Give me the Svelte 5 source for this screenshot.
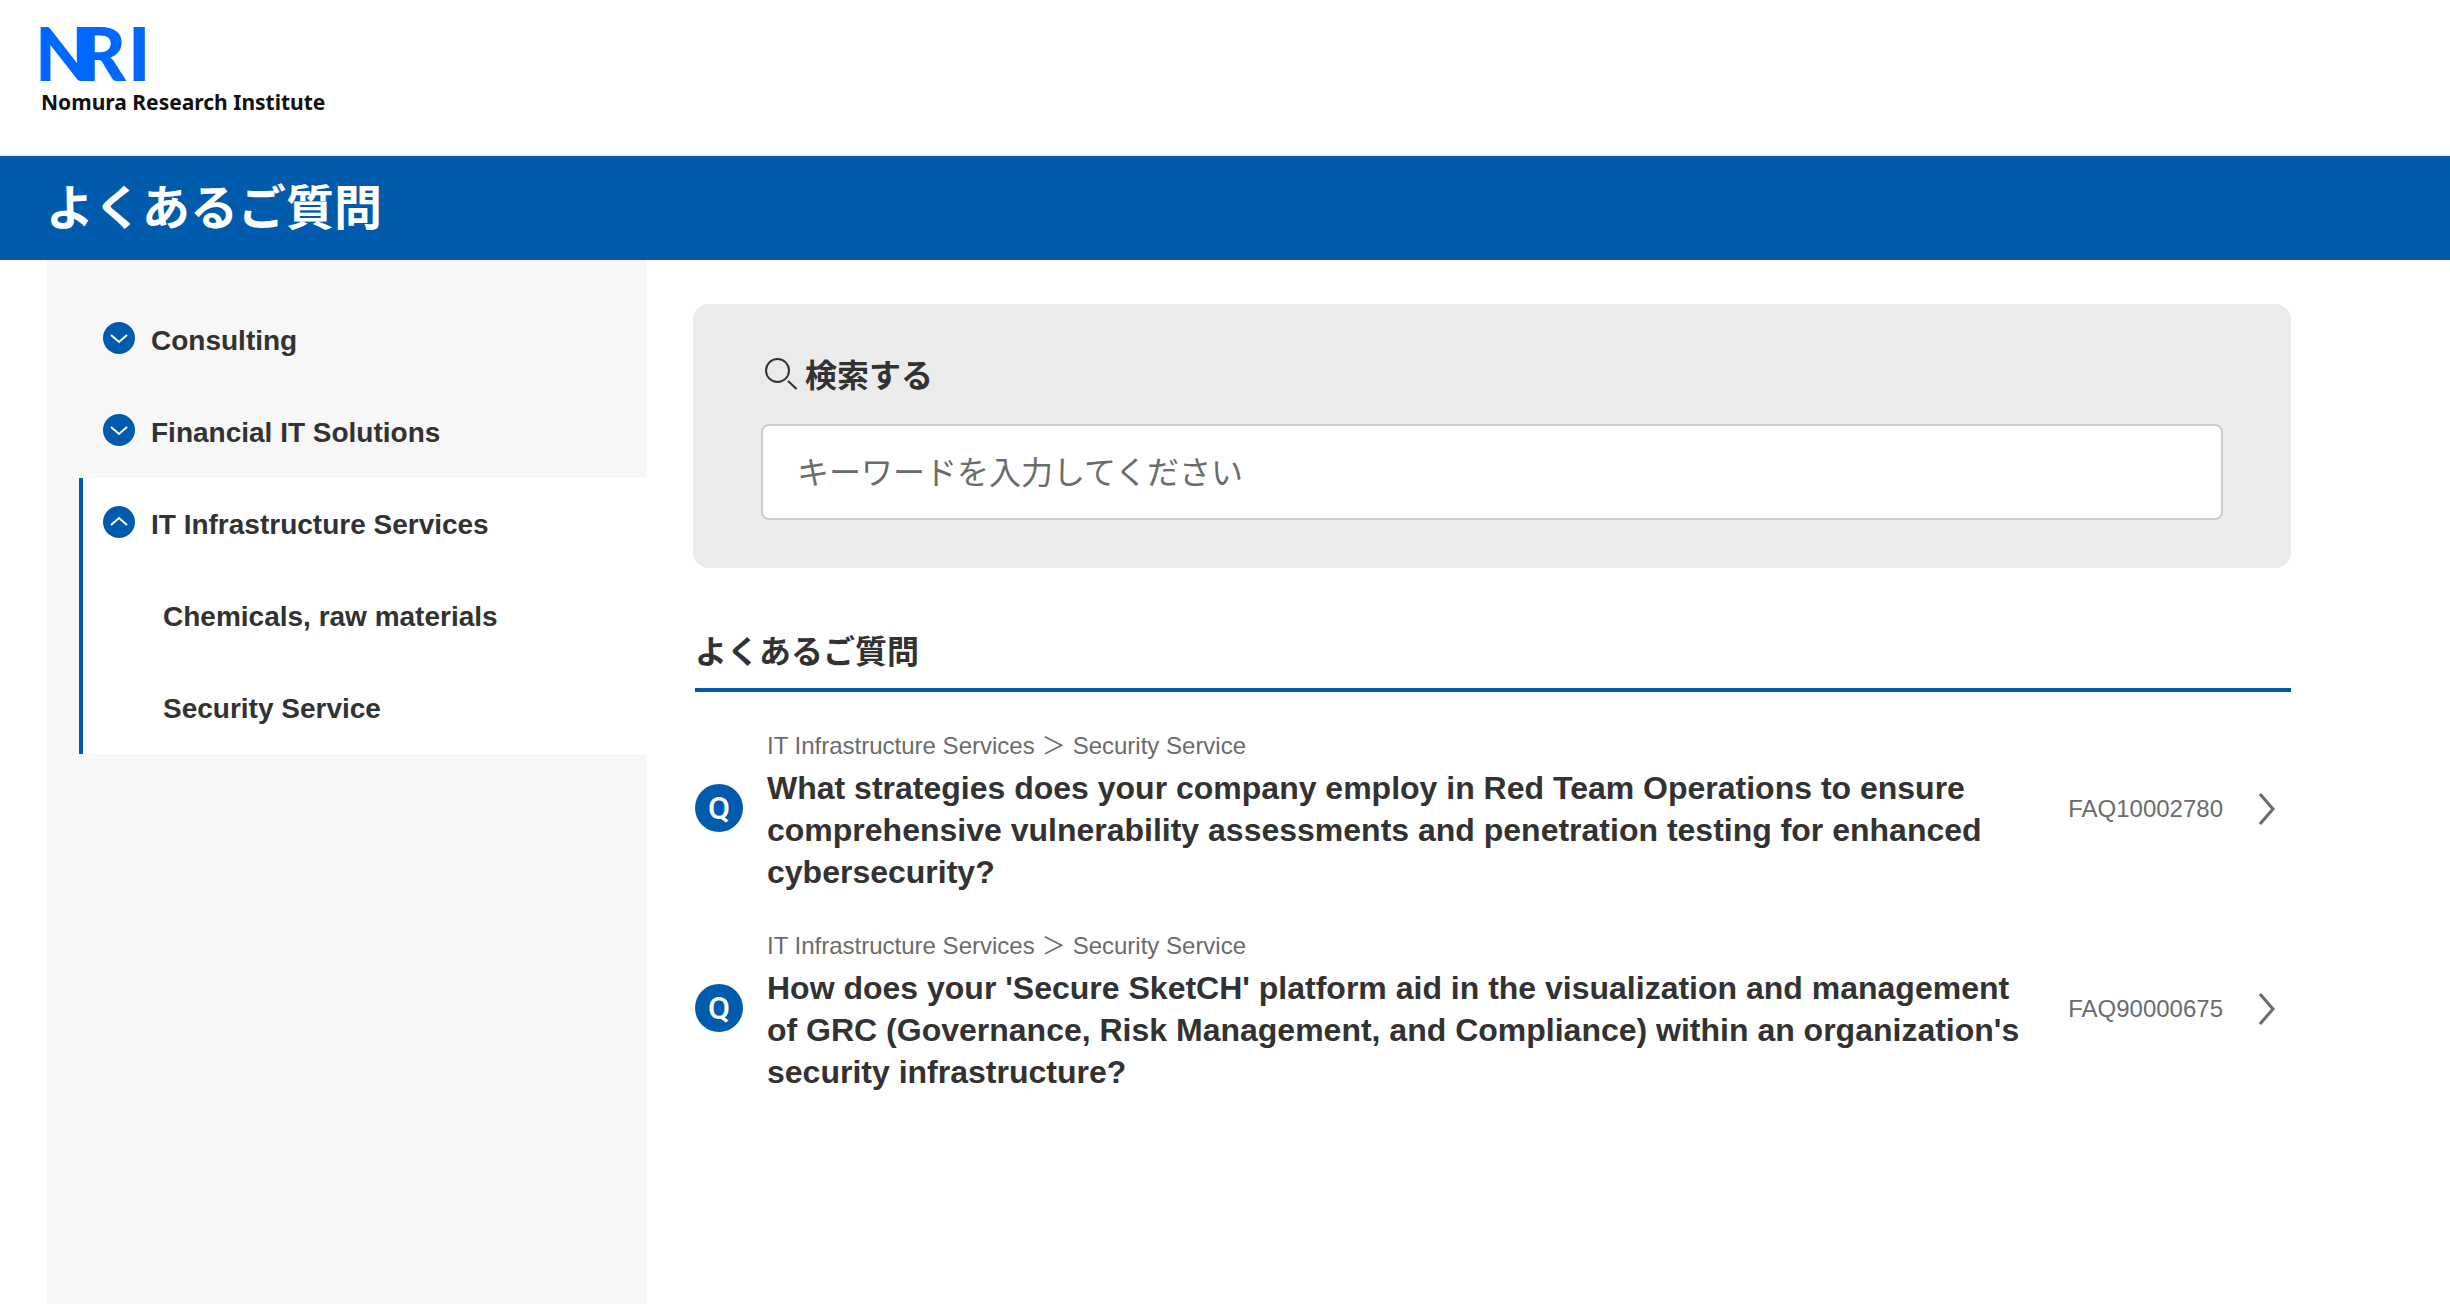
<script>
  const categories = [
    { name: 'Consulting', open: false, children: [] },
    { name: 'Financial IT Solutions', open: false, children: [] },
    {
      name: 'IT Infrastructure Services',
      open: true,
      children: ['Chemicals, raw materials', 'Security Service'],
    },
  ];

  const faqs = [
    {
      id: 'FAQ10002780',
      path: ['IT Infrastructure Services', 'Security Service'],
      question:
        'What strategies does your company employ in Red Team Operations to ensure comprehensive vulnerability assessments and penetration testing for enhanced cybersecurity?',
    },
    {
      id: 'FAQ90000675',
      path: ['IT Infrastructure Services', 'Security Service'],
      question:
        "How does your 'Secure SketCH' platform aid in the visualization and management of GRC (Governance, Risk Management, and Compliance) within an organization's security infrastructure?",
    },
  ];
</script>

<div class="page">
  <header class="top">
    <a class="logo" href="/">
      <svg class="mark" viewBox="0 0 108 54" aria-hidden="true">
        <text x="-6 37 87" y="53">NRI</text>
      </svg>
      <span class="company">Nomura Research Institute</span>
    </a>
  </header>

  <div class="banner"><h1>よくあるご質問</h1></div>

  <div class="body">
    <nav class="side" aria-label="カテゴリ">
      <ul>
        {#each categories as c}
          <li class:active={c.open}>
            <button class="cat" type="button" aria-expanded={c.open}>
              <svg class="toggle" viewBox="0 0 32 32" aria-hidden="true">
                <circle cx="16" cy="16" r="16" />
                <path d={c.open ? 'M8 19L16 12L24 19' : 'M8 13L16 20L24 13'} />
              </svg>
              {c.name}
            </button>
            {#if c.open}
              <ul>
                {#each c.children as child}
                  <li><a class="sub" href="#category">{child}</a></li>
                {/each}
              </ul>
            {/if}
          </li>
        {/each}
      </ul>
    </nav>

    <main>
      <form class="search">
        <label for="keyword">
          <svg class="lens" viewBox="0 0 32 32" aria-hidden="true">
            <circle cx="12.500" cy="12.500" r="11.500" />
            <path d="M23 23L31.500 31" />
          </svg>
          検索する
        </label>
        <input id="keyword" type="text" placeholder="キーワードを入力してください" />
      </form>

      <section>
        <h2>よくあるご質問</h2>
        <ul class="faqs">
          {#each faqs as f}
            <li>
              <a class="faq" href="#{f.id}">
                <span class="q">Q</span>
                <span class="text">
                  <span class="crumbs">
                    {f.path[0]}<span class="sep">＞</span>{f.path[1]}
                  </span>
                  <span class="question">{f.question}</span>
                </span>
                <span class="id">{f.id}</span>
                <svg class="arrow" viewBox="0 0 16 34" aria-hidden="true">
                  <path d="M1 2L14 17L1 32" />
                </svg>
              </a>
            </li>
          {/each}
        </ul>
      </section>
    </main>
  </div>
</div>

<style>
  :global(body) {
    background: #fff;
  }

  .page {
    display: flex;
    flex-direction: column;
    min-height: 100vh;
    color: #323232;
    font-family: 'Liberation Sans', 'Noto Sans CJK JP', sans-serif;
  }

  h1,
  h2,
  ul {
    margin: 0;
    padding: 0;
  }

  ul {
    list-style: none;
  }

  a {
    color: inherit;
    text-decoration: none;
  }

  .top {
    padding: 28px 41px 38px;
    border-bottom: 2px solid #f0f0f0;
  }

  .logo {
    display: inline-flex;
    flex-direction: column;
    gap: 6px;
  }

  .mark {
    display: block;
    width: 108px;
    height: 54px;
    overflow: visible;
    fill: #0068ff;
    font: 900 74px Lato, sans-serif;
  }

  .company {
    color: #111;
    font: 700 21px/28px 'Noto Sans', sans-serif;
  }

  .banner {
    padding: 17px 46px 15px;
    background: #005bac;
    color: #fff;
  }

  h1 {
    font-size: 48px;
    line-height: 72px;
  }

  .body {
    flex: 1;
    display: flex;
    gap: 46px;
    padding: 0 159px 0 47px;
  }

  .side {
    flex: 0 0 600px;
    box-sizing: border-box;
    padding: 34px 0 34px 32px;
    background: #f7f7f7;
    font-size: 28px;
    font-weight: 700;
    line-height: 40px;
  }

  .side > ul > li {
    border-left: 4px solid transparent;
  }

  .side > ul > li.active {
    border-color: #005bac;
    background: #fff;
  }

  .cat {
    display: flex;
    align-items: center;
    gap: 16px;
    width: 100%;
    padding: 27px 20px 25px;
    border: 0;
    background: none;
    color: inherit;
    font: inherit;
    text-align: left;
    cursor: pointer;
  }

  .toggle {
    width: 32px;
    height: 32px;
    margin-bottom: 6px;
    fill: #005bac;
  }

  .toggle path {
    fill: none;
    stroke: #fff;
    stroke-width: 2;
  }

  .sub {
    display: block;
    padding: 27px 20px 25px 80px;
  }

  main {
    flex: 1;
    min-width: 0;
    padding: 44px 0;
  }

  .search {
    display: flex;
    flex-direction: column;
    gap: 24px;
    padding: 48px 68px;
    border-radius: 16px;
    background: #ebebeb;
  }

  .search label {
    display: flex;
    align-items: center;
    gap: 8px;
    padding-left: 4px;
    font-size: 32px;
    font-weight: 700;
    line-height: 48px;
  }

  .lens {
    width: 32px;
    height: 32px;
    margin-bottom: 4px;
    fill: none;
    stroke: #323232;
    stroke-width: 2;
  }

  .search input {
    width: 100%;
    height: 96px;
    box-sizing: border-box;
    padding: 2px 34px 0;
    border: 2px solid #cecece;
    border-radius: 8px;
    background: #fff;
    color: #323232;
    font: inherit;
    font-size: 32px;
  }

  .search input::placeholder {
    color: #6b6b6b;
    opacity: 1;
  }

  section {
    padding: 60px 0 0 2px;
  }

  h2 {
    padding-bottom: 12px;
    border-bottom: 4px solid #005bac;
    font-size: 32px;
    line-height: 48px;
  }

  .faqs {
    display: grid;
    gap: 32px;
    padding-top: 33px;
  }

  .faq {
    display: flex;
    align-items: center;
    padding-right: 16px;
  }

  .q {
    flex: none;
    width: 48px;
    margin: 0 24px 2px 0;
    border-radius: 50%;
    background: #005bac;
    color: #fff;
    font: 500 32px/48px Roboto, sans-serif;
    text-align: center;
  }

  .text {
    flex: 1;
    min-width: 0;
    line-height: 42px;
  }

  .crumbs,
  .question {
    display: block;
  }

  .crumbs,
  .id {
    color: #6b6b6b;
    font-size: 24px;
  }

  .sep {
    margin: 0 7px;
  }

  .question {
    font-size: 32px;
    font-weight: 700;
  }

  .id {
    margin: 0 36px 0 44px;
  }

  .arrow {
    width: 16px;
    height: 34px;
    fill: none;
    stroke: #6b6b6b;
    stroke-width: 3;
  }
</style>
